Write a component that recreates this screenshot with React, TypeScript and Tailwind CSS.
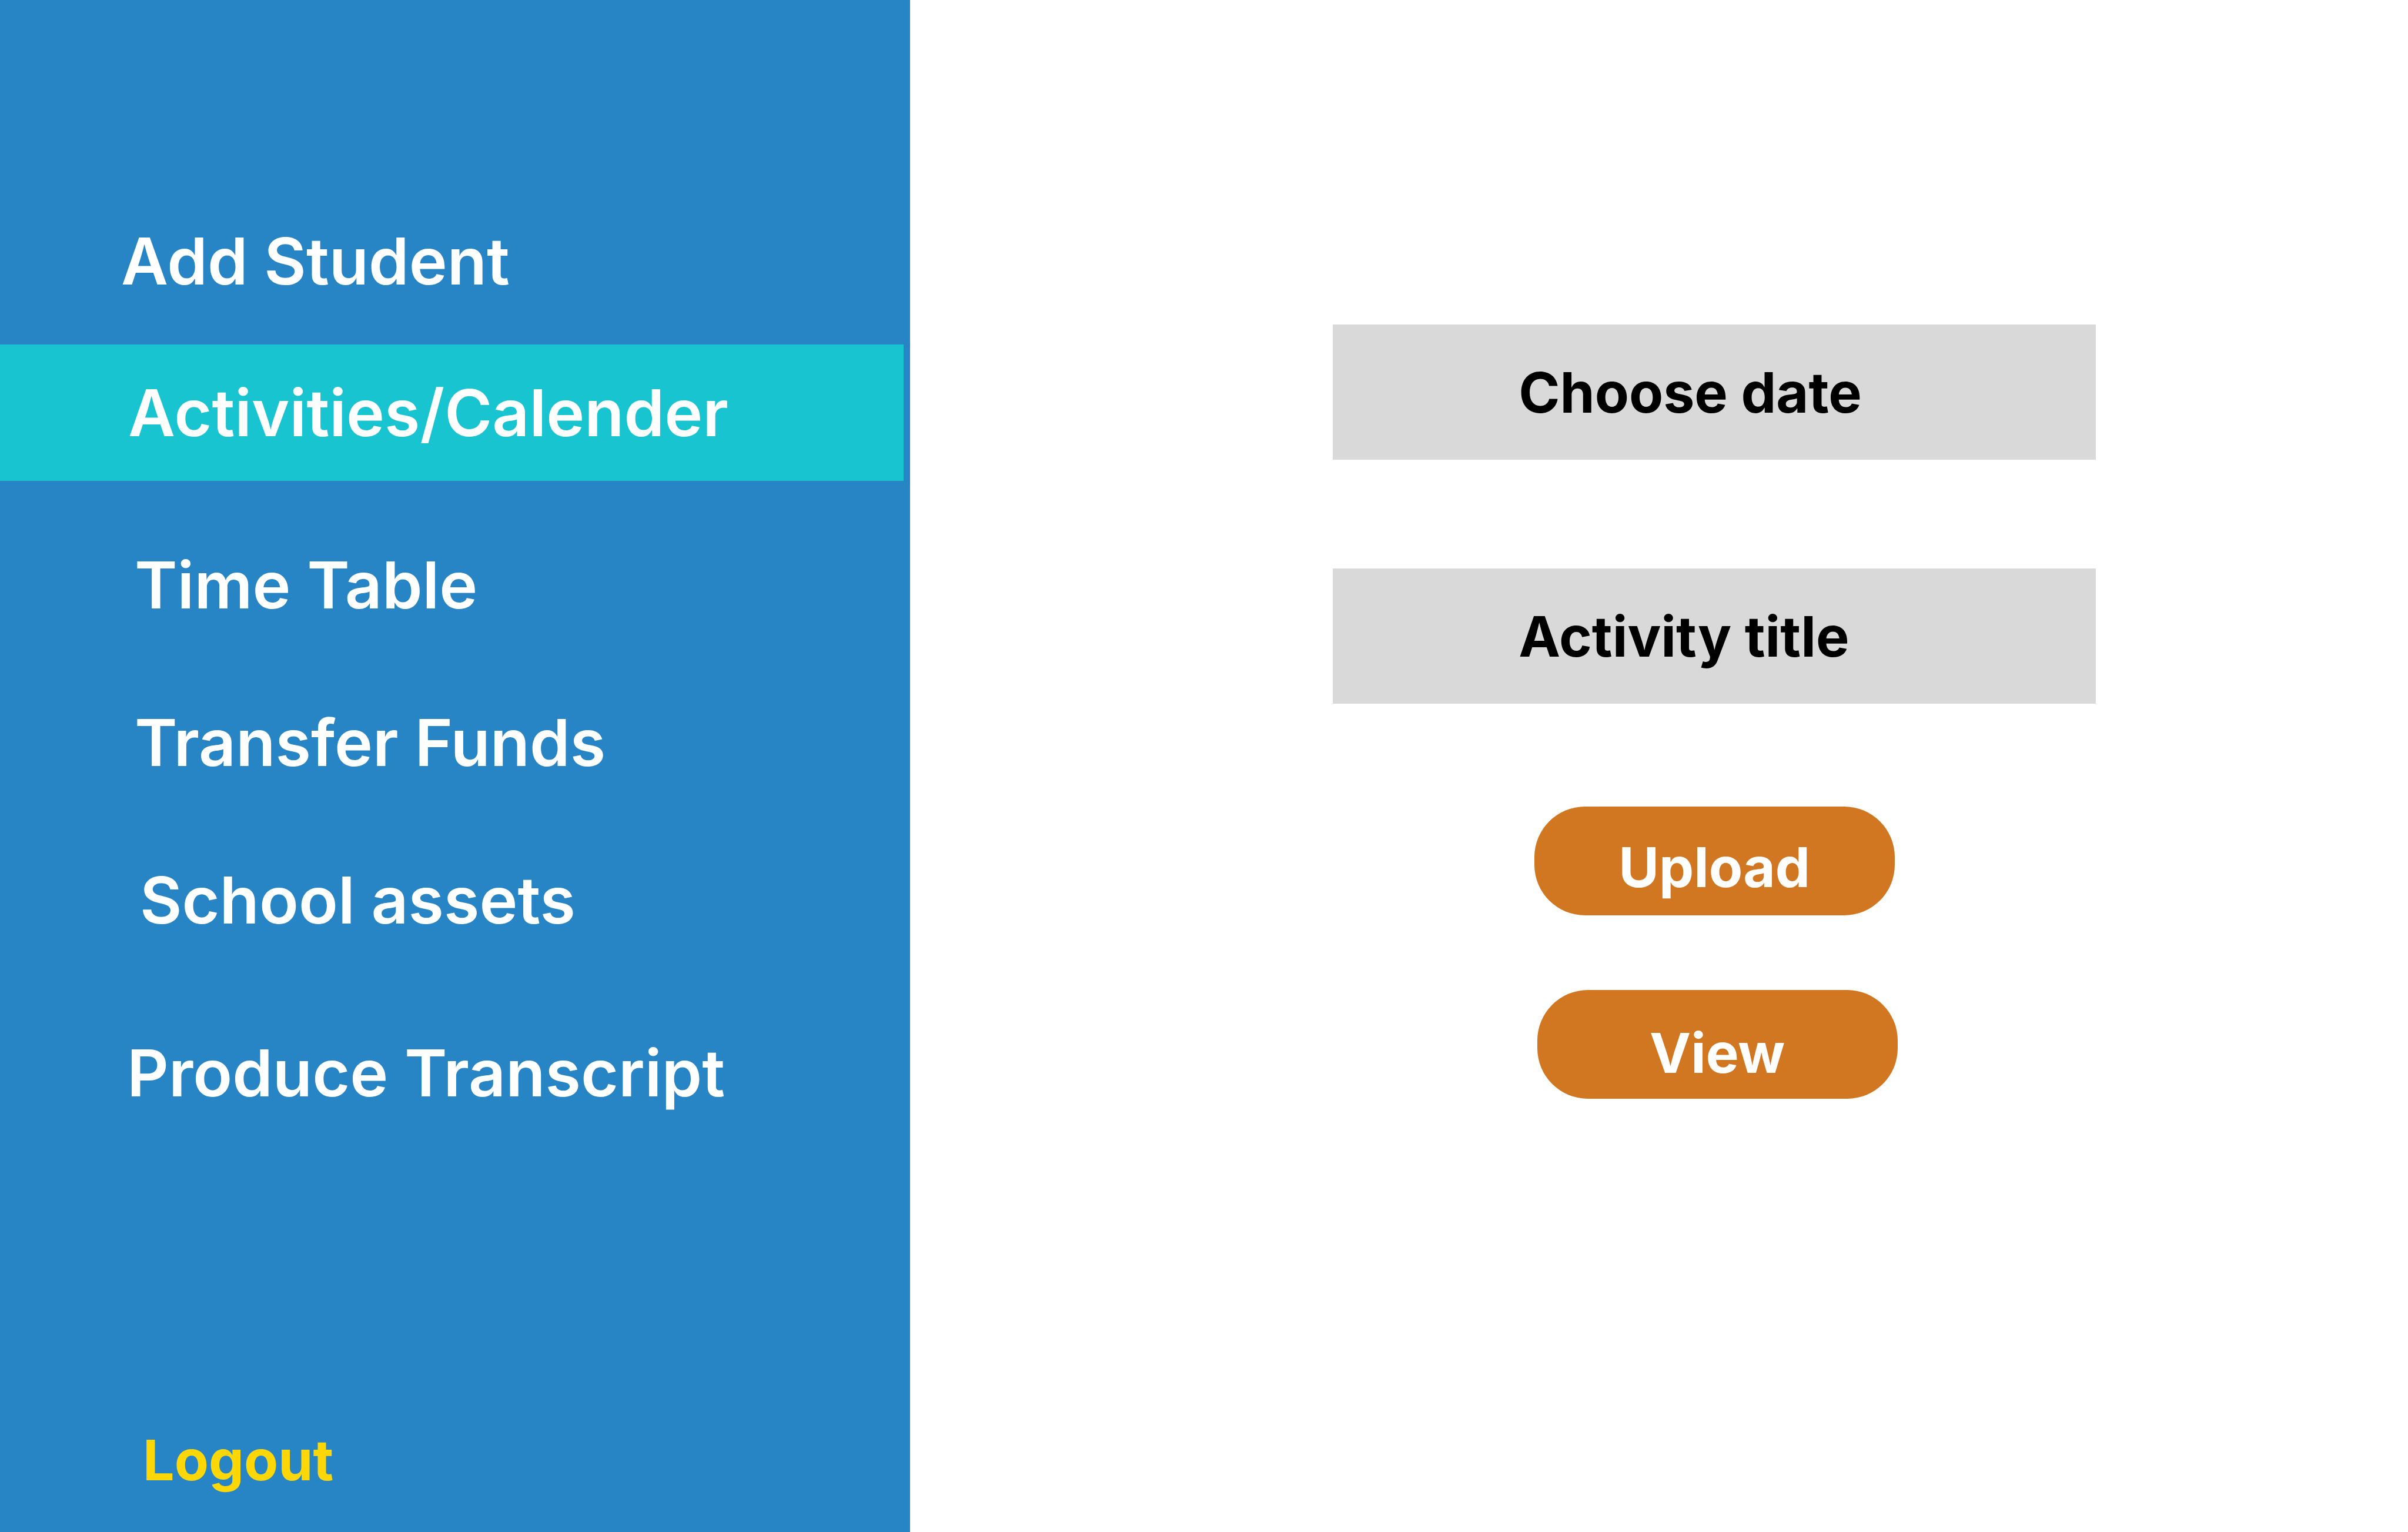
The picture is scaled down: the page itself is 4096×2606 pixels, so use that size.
type NavItem = { label: string; href: string; className: string; active?: boolean };

const navItems: NavItem[] = [
  { label: "Add Student", href: "#add-student", className: "pl-[206px]" },
  {
    label: "Activities/Calender",
    href: "#activities",
    className: "mt-19 mr-[11px] bg-[#17c4d0] py-[50px] pl-[218px]",
    active: true,
  },
  { label: "Time Table", href: "#time-table", className: "mt-[111px] pl-[229px]" },
  { label: "Transfer Funds", href: "#transfer-funds", className: "mt-34 pl-[229px]" },
  { label: "School assets", href: "#school-assets", className: "mt-34 pl-[238px]" },
  { label: "Produce Transcript", href: "#transcript", className: "mt-[162px] pl-54" },
];

function Sidebar() {
  return (
    <aside className="flex w-[37.8%] shrink-0 flex-col bg-[#2785c6] pt-[378px] pb-[66px]">
      <nav className="flex flex-col text-[110px] leading-[132px] font-semibold text-white">
        {navItems.map((item) => (
          <a
            key={item.label}
            href={item.href}
            aria-current={item.active ? "page" : undefined}
            className={`block whitespace-nowrap ${item.className}`}
          >
            {item.label}
          </a>
        ))}
      </nav>
      <button
        type="button"
        className="mt-auto pl-[243px] text-left text-[95px] leading-28 font-bold text-[#ffd706]"
      >
        Logout
      </button>
    </aside>
  );
}

function Field({ label, name }: { label: string; name: string }) {
  return (
    <input
      type="text"
      name={name}
      aria-label={label}
      placeholder={label}
      className="h-[230px] w-full bg-[#d9d9d9] pl-[316px] text-[95px] font-bold text-black placeholder:text-black placeholder:opacity-100"
    />
  );
}

export default function App() {
  return (
    <div className="flex min-h-screen bg-white font-['Inter',sans-serif]">
      <Sidebar />
      <main className="flex flex-1 flex-col items-center pt-[552px] pl-47">
        <form className="flex w-[55%] flex-col items-center">
          <div className="flex w-full flex-col gap-[185px]">
            <Field label="Choose date" name="date" />
            <Field label="Activity title" name="title" />
          </div>
          <button
            type="button"
            className="mt-[175px] h-[185px] w-[613px] rounded-[86px] bg-[#d27721] pt-5 text-[94px] leading-28 font-bold text-white"
          >
            Upload
          </button>
          <button
            type="button"
            className="mt-[127px] ml-2.5 h-[185px] w-[613px] rounded-[86px] bg-[#d27721] pt-7 text-[94px] leading-28 font-bold text-white"
          >
            View
          </button>
        </form>
      </main>
    </div>
  );
}
